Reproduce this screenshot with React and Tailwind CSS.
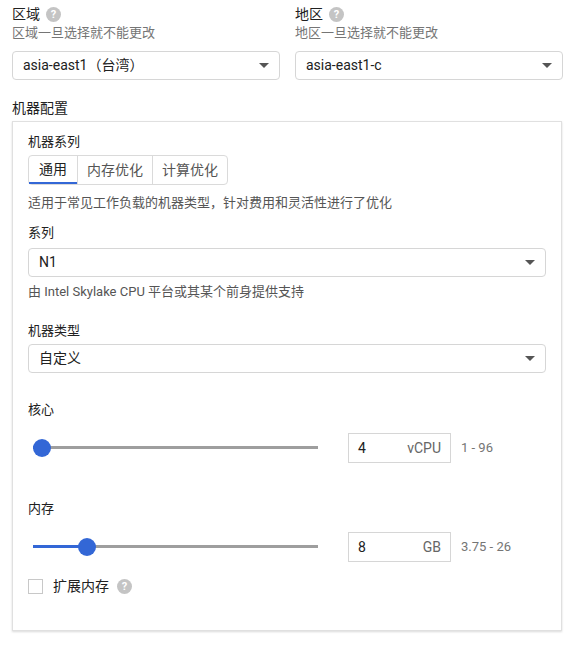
import React from 'react';

const FONT = { fontFamily: 'Roboto, "Noto Sans CJK SC", sans-serif' };

function Help() {
  return (
    <span className="inline-flex h-[15px] w-[15px] items-center justify-center rounded-full bg-[#c4c4c4] text-[11px] font-bold leading-none text-white">?</span>
  );
}

function Caret() {
  return (
    <svg width="10" height="5" viewBox="0 0 10 5"><path d="M0 0h10L5 5z" fill="#555" /></svg>
  );
}

function Select({ value }) {
  return (
    <div className="flex h-[29px] items-center justify-between rounded-sm border border-[#d6d6d6] bg-white pl-[10px] pr-[10px] text-[14px] text-[#212121]">
      <span>{value}</span>
      <Caret />
    </div>
  );
}

function Slider({ pct, value, unit, range }) {
  return (
    <div className="mt-[14px] flex items-center">
      <div className="relative ml-[5px] h-[20px] w-[285px]">
        <div className="absolute left-0 right-0 top-[8px] h-[3px] bg-[#9e9e9e]" />
        <div className="absolute left-0 top-[8px] h-[3px] bg-[#3367d6]" style={{ width: pct + '%' }} />
        <div className="absolute top-[1px] h-[18px] w-[18px] -translate-x-1/2 rounded-full bg-[#3367d6]" style={{ left: pct + '%' }} />
      </div>
      <div className="ml-[30px] flex h-[30px] w-[103px] items-center justify-between border border-[#d6d6d6] px-[9px] text-[14px]">
        <span className="text-[#212121]">{value}</span>
        <span className="text-[#666]">{unit}</span>
      </div>
      <span className="ml-[10px] text-[13px] text-[#757575]">{range}</span>
    </div>
  );
}

export default function App() {
  return (
    <div className="h-[646px] w-[580px] bg-white pt-[5px] text-[#212121]" style={FONT}>
      <div className="flex gap-[15px] px-[12px]">
        {[['区域', '区域一旦选择就不能更改', 'asia-east1（台湾）'], ['地区', '地区一旦选择就不能更改', 'asia-east1-c']].map(([t, s, v]) => (
          <div key={t} className="w-[268px]">
            <div className="flex items-center gap-[6px] text-[14px] leading-[18px]">{t}<Help /></div>
            <div className="text-[13px] leading-[20px] text-[#757575]">{s}</div>
            <div className="mt-[8px]"><Select value={v} /></div>
          </div>
        ))}
      </div>
      <div className="mt-[19px] px-[12px] text-[14px] leading-[18px]">机器配置</div>
      <div className="ml-[12px] mr-[18px] mt-[4px] h-[510px] border border-[#e0e0e0] px-[15px] pt-[11px] shadow-[0_1px_2px_rgba(0,0,0,0.15)]">
        <div className="text-[13px] leading-[18px]">机器系列</div>
        <div className="mt-[4px] flex w-fit rounded-sm border border-[#dadada] text-[14px]">
          <div className="flex h-[28px] items-center border-b-2 border-[#3367d6] px-[10px]">通用</div>
          <div className="flex h-[28px] items-center border-l border-[#dadada] px-[9px] text-[#555]">内存优化</div>
          <div className="flex h-[28px] items-center border-l border-[#dadada] px-[9px] text-[#555]">计算优化</div>
        </div>
        <div className="mt-[8px] text-[13px] leading-[20px] text-[#555]">适用于常见工作负载的机器类型，针对费用和灵活性进行了优化</div>
        <div className="mt-[11px] text-[13px] leading-[18px]">系列</div>
        <div className="mt-[6px]"><Select value="N1" /></div>
        <div className="mt-[5px] text-[13px] leading-[20px] text-[#555]">由 Intel Skylake CPU 平台或其某个前身提供支持</div>
        <div className="mt-[20px] text-[13px] leading-[18px]">机器类型</div>
        <div className="mt-[4px]"><Select value="自定义" /></div>
        <div className="mt-[28px] text-[13px] leading-[18px]">核心</div>
        <Slider pct={3} value="4" unit="vCPU" range="1 - 96" />
        <div className="mt-[37px] text-[13px] leading-[18px]">内存</div>
        <Slider pct={19} value="8" unit="GB" range="3.75 - 26" />
        <div className="mt-[14px] flex items-center text-[14px]">
          <div className="h-[15px] w-[15px] border border-[#c8c8c8]" />
          <span className="ml-[10px] mr-[8px]">扩展内存</span>
          <Help />
        </div>
      </div>
    </div>
  );
}
